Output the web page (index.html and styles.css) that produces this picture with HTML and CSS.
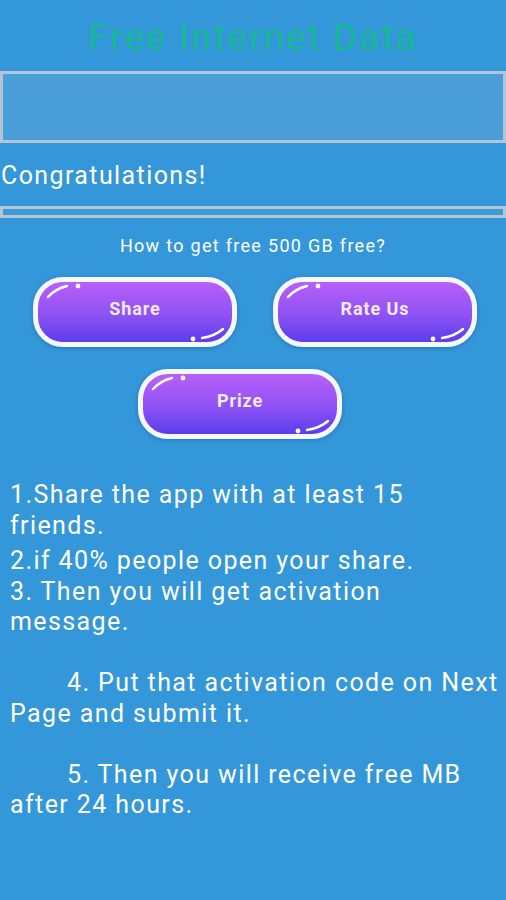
FILE: index.html
```html
<!DOCTYPE html>
<html lang="en">
<head>
  <meta charset="UTF-8">
  <title>Free Internet Data</title>
  <link rel="stylesheet" href="styles.css">
</head>
<body>

  <h1 class="title">Free Internet Data</h1>
  <div class="banner"></div>

  <div class="congrats">Congratulations!</div>
  <div class="bar"></div>

  <div class="question">How to get free 500 GB free?</div>

  <div class="btn-row">
    <button class="glossy-btn">
      <svg class="shine" viewBox="0 0 204 69"><path d="M15 20 Q22 12 34 9" /><circle cx="45" cy="9" r="2.4" /><path d="M169 61 Q182 59 190 52" /><circle cx="160" cy="62" r="2.4" /></svg>
      Share
    </button>
    <button class="glossy-btn">
      <svg class="shine" viewBox="0 0 204 69"><path d="M15 20 Q22 12 34 9" /><circle cx="45" cy="9" r="2.4" /><path d="M169 61 Q182 59 190 52" /><circle cx="160" cy="62" r="2.4" /></svg>
      Rate Us
    </button>
  </div>
  <div class="btn-row single">
    <button class="glossy-btn">
      <svg class="shine" viewBox="0 0 204 69"><path d="M15 20 Q22 12 34 9" /><circle cx="45" cy="9" r="2.4" /><path d="M169 61 Q182 59 190 52" /><circle cx="160" cy="62" r="2.4" /></svg>
      Prize
    </button>
  </div>

  <div class="steps">
    <p>1.Share the app with at least 15 friends.</p>
    <p class="gap">2.if 40% people open your share.</p>
    <p>3. Then you will get activation message.</p>
    <p class="indent">4. Put that activation code on Next Page and submit it.</p>
    <p class="indent">5. Then you will receive free MB after 24 hours.</p>
  </div>

</body>
</html>
```

FILE: styles.css
```css
body {
  margin: 0;
  background-color: #3397d9;
  font-family: Roboto, "Liberation Sans", sans-serif;
  color: #fff;
  height: 900px;
}

.title {
  margin: 0 0 12px;
  padding-top: 17px;
  font-size: 37px;
  font-weight: normal;
  letter-spacing: 2px;
  line-height: 42px;
  text-align: center;
  color: #17b995;
}

.banner {
  height: 66px;
  border: 3px solid #b3c5d6;
  background-color: #4a9fd8;
}

.congrats {
  margin-top: 19px;
  font-size: 25px;
  letter-spacing: 1.4px;
  line-height: 28px;
  padding-left: 1px;
}

.bar {
  margin-top: 16px;
  height: 6px;
  border: 3px solid #b3c5d6;
  background-color: #3f9ad8;
}

.question {
  margin-top: 18px;
  font-size: 18px;
  letter-spacing: 1.3px;
  line-height: 20px;
  text-align: center;
}

.btn-row {
  display: flex;
  justify-content: center;
  gap: 36px;
  margin-top: 21px;
  padding-left: 4px;
}

.btn-row.single {
  justify-content: flex-start;
  padding-left: 138px;
  margin-top: 22px;
}

.glossy-btn {
  position: relative;
  width: 204px;
  height: 70px;
  border: 5px solid #f4f8fb;
  border-radius: 30px;
  background: linear-gradient(#b860f8, #8e52f4 55%, #5a3ded);
  box-shadow: 0 1px 4px rgba(20, 60, 110, 0.35);
  color: #f3eaff;
  font-family: Roboto, "Liberation Sans", sans-serif;
  font-size: 18px;
  font-weight: bold;
  letter-spacing: 0.9px;
  padding: 0 0 8px;
}

.shine {
  position: absolute;
  left: -5px;
  top: -5px;
  width: 204px;
  height: 69px;
}

.shine path {
  fill: none;
  stroke: #fff;
  stroke-width: 2.4;
  stroke-linecap: round;
}

.shine circle {
  fill: #fff;
}

.steps {
  margin-top: 41px;
  padding: 0 6px 0 10px;
  font-size: 25px;
  letter-spacing: 1.4px;
  line-height: 30.5px;
}

.steps p {
  margin: 0;
}

.steps .gap {
  margin-top: 5px;
}

.steps .indent {
  margin-top: 30.5px;
  text-indent: 57px;
}
```
